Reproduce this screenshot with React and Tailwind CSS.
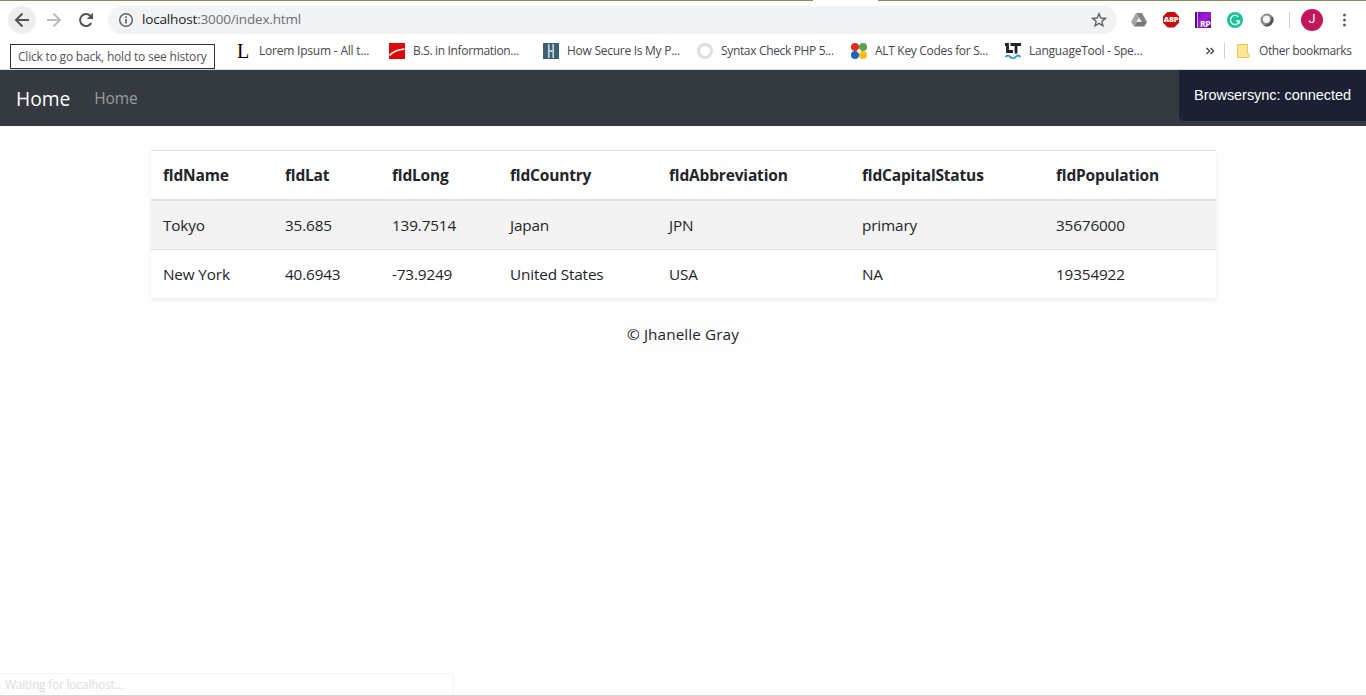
import React from "react";

const columns = [
  ["fldName", "Tokyo", "New York", "w-[122px]"],
  ["fldLat", "35.685", "40.6943", "w-[107px]"],
  ["fldLong", "139.7514", "-73.9249", "w-[118px]"],
  ["fldCountry", "Japan", "United States", "w-[159px]"],
  ["fldAbbreviation", "JPN", "USA", "w-[193px]"],
  ["fldCapitalStatus", "primary", "NA", "w-[194px]"],
  ["fldPopulation", "35676000", "19354922", "w-[172px]"],
];

function Toolbar() {
  return (
    <div className="flex h-[37px] shrink-0 items-center bg-white">
      <div className="ml-2 flex size-7 items-center justify-center rounded-full bg-[#eeeeee]">
        <svg width="16" height="16" viewBox="0 0 16 16" fill="none" stroke="#505357" strokeWidth="2">
          <path d="M15 8H2.500M8.500 1.500L2 8l6.500 6.500" />
        </svg>
      </div>
      <svg className="ml-[10px]" width="16" height="16" viewBox="0 0 16 16" fill="none" stroke="#babcbe" strokeWidth="2">
        <path d="M1 8h12.500M7.500 1.500L14 8l-6.500 6.500" />
      </svg>
      <svg className="ml-4" width="16" height="16" viewBox="0 0 16 16" fill="none">
        <path d="M13.300 11A6 6 0 1 1 12.500 4" stroke="#505357" strokeWidth="2" />
        <path d="M15 0.800V7H8.800z" fill="#505357" />
      </svg>
      <div className="ml-[14px] flex h-7 w-[1009px] items-center rounded-full bg-[#f1f3f4]">
        <svg className="ml-[10px]" width="16" height="16" viewBox="0 0 16 16" fill="none">
          <circle cx="8" cy="8" r="6.300" stroke="#5f6368" strokeWidth="1.500" />
          <path d="M8 7v4.600M8 4.200v1.700" stroke="#5f6368" strokeWidth="1.700" />
        </svg>
        <span className="ml-2 text-[13.500px] tracking-[-0.160px] text-[#6b6f73]">
          <span className="text-[#202124]">localhost</span>:3000/index.html
        </span>
        <svg className="mr-[10px] ml-auto" width="16" height="16" viewBox="0 0 16 16" fill="none" stroke="#5f6368" strokeWidth="1.400">
          <path d="M8 1.700l1.750 4.300 4.650.350-3.570 3 1.120 4.500L8 11.400l-3.950 2.450 1.120-4.500-3.570-3 4.650-.350z" />
        </svg>
      </div>
      <svg className="ml-[14px]" width="16" height="16" viewBox="0 0 16 16">
        <path d="M5 1h6l5 9H10.700z" fill="#858585" />
        <path d="M5 1l3 5-5 8.500L0 10z" fill="#a5a5a5" />
        <path d="M5.700 10H16l-2.700 4.500H3z" fill="#777777" />
        <path d="M8 6l2.500 4h-5z" fill="#ececec" />
      </svg>
      <div className="ml-4 flex size-4 items-center justify-center bg-[#c70d0d] [clip-path:polygon(30%_0,70%_0,100%_30%,100%_70%,70%_100%,30%_100%,0_70%,0_30%)]">
        <span className="text-[7.500px] leading-none font-extrabold tracking-[-0.300px] text-white">ABP</span>
      </div>
      <div className="ml-4 flex size-4 bg-linear-to-br from-[#6a0dad] via-[#a51bd4] to-[#61109a]">
        <span className="h-4 w-[3px] shrink-0 border-r border-[#e5a2f3] bg-[#4b167c]" />
        <span className="mt-auto ml-[2px] text-[8.500px] leading-[9px] font-bold tracking-[-0.400px] text-white">RP</span>
      </div>
      <svg className="ml-4" width="16" height="16" viewBox="0 0 16 16" fill="none">
        <circle cx="8" cy="8" r="8" fill="#15c39a" />
        <path d="M11.300 4.700A4.600 4.600 0 1 0 12.500 9H9.200M12.400 8.600v2.800" stroke="white" strokeWidth="1.400" />
      </svg>
      <svg className="ml-4" width="16" height="16" viewBox="0 0 16 16">
        <circle cx="8" cy="8" r="6.500" fill="#8a8a8a" />
        <path d="M13 4a6.500 6.500 0 0 1-8.500 9.500c4.500 0 7.500-3.500 8.500-9.500z" fill="#555555" />
        <circle cx="7.500" cy="7.200" r="3.700" fill="#f4f4f4" />
      </svg>
      <span className="ml-[14px] h-4 w-px bg-[#cfd1d3]" />
      <div className="ml-[11px] flex size-[22px] items-center justify-center rounded-full bg-[#c2185b] font-[Roboto,sans-serif] text-[12.500px] text-white">J</div>
      <svg className="ml-[13px]" width="16" height="16" viewBox="0 0 16 16" fill="#5f6368">
        <circle cx="8.500" cy="3" r="1.500" />
        <circle cx="8.500" cy="8" r="1.500" />
        <circle cx="8.500" cy="13" r="1.500" />
      </svg>
    </div>
  );
}

function Bookmark({ icon, label, spacing }) {
  return (
    <div className="flex w-[154px] shrink-0 items-center gap-2">
      {icon}
      <span className={`whitespace-nowrap ${spacing}`}>{label}</span>
    </div>
  );
}

function BookmarksBar() {
  return (
    <div className="flex h-[31px] shrink-0 items-center bg-white pb-[5px] pl-[235px] text-[12px] text-[#46494d]">
      <Bookmark
        spacing="tracking-[-0.210px]"
        label="Lorem Ipsum - All t..."
        icon={<span className="flex size-4 items-center justify-center font-['Liberation_Serif',serif] text-[20px] leading-none text-black">L</span>}
      />
      <Bookmark
        spacing="tracking-[-0.340px]"
        label="B.S. in Information..."
        icon={
          <svg width="16" height="16" viewBox="0 0 16 16">
            <rect width="16" height="16" fill="#dd0909" />
            <path d="M0.500 12.500C4 8.500 9 6.500 15.500 6" fill="none" stroke="white" strokeWidth="1.600" />
          </svg>
        }
      />
      <Bookmark
        spacing="tracking-[-0.270px]"
        label="How Secure Is My P..."
        icon={
          <svg width="16" height="16" viewBox="0 0 16 16">
            <rect width="16" height="16" fill="#3b6074" />
            <path d="M5.800 1v14M10.200 1v14M6 8h4" fill="none" stroke="#b9ccd3" strokeWidth="1.800" />
          </svg>
        }
      />
      <Bookmark
        spacing="tracking-[-0.340px]"
        label="Syntax Check PHP 5..."
        icon={<span className="size-4 rounded-full border-3 border-[#dfdfdf] bg-white" />}
      />
      <Bookmark
        spacing="tracking-[-0.310px]"
        label="ALT Key Codes for S..."
        icon={
          <svg width="16" height="16" viewBox="0 0 16 16">
            <circle cx="4" cy="4" r="4" fill="#df2d20" />
            <circle cx="12" cy="4" r="4" fill="#58a447" />
            <circle cx="4" cy="12" r="4" fill="#1d65b8" />
            <circle cx="12" cy="12" r="4" fill="#f6bd17" />
            <circle cx="8" cy="8" r="2" fill="#f5eee0" />
          </svg>
        }
      />
      <Bookmark
        spacing="tracking-[-0.240px]"
        label="LanguageTool - Spe..."
        icon={
          <svg width="16" height="16" viewBox="0 0 16 16" fill="none">
            <path d="M0 1.500h2.500v7H8M5.500 1.500H16M11 1v9.500" stroke="#222222" strokeWidth="2.800" />
            <path d="M0.500 14c2-2 3-2 5 0s3 2 5 0 3-2 5 0" stroke="#2f9fce" strokeWidth="2" />
          </svg>
        }
      />
      <svg className="ml-[46px]" width="10" height="10" viewBox="0 0 10 10" fill="none" stroke="#505357" strokeWidth="1.600">
        <path d="M1.500 2l3 3-3 3M5.500 2l3 3-3 3" />
      </svg>
      <span className="ml-[9px] h-4 w-px bg-[#cfd1d3]" />
      <svg className="ml-3" width="14" height="16" viewBox="0 0 14 16">
        <path d="M.5 1.500h10v9l1.500.500v3.500H.5z" fill="#ffe69a" stroke="#e9c65a" />
      </svg>
      <span className="ml-2 tracking-[-0.400px] whitespace-nowrap">Other bookmarks</span>
    </div>
  );
}

export default function App() {
  return (
    <div className="relative flex h-[696px] w-[1366px] flex-col overflow-hidden bg-[#fefefe] font-['Open_Sans','Noto_Sans',sans-serif]">
      <div className="flex h-px shrink-0 bg-[#8c8662]">
        <span className="ml-[813px] h-px w-[65px] bg-white" />
      </div>
      <Toolbar />
      <BookmarksBar />
      <div className="h-px shrink-0 bg-[#d5d8dc]" />

      <nav className="flex h-14 shrink-0 items-start bg-[#343a40]">
        <a className="ml-4 pt-[14px] text-[19.300px] leading-[30px] tracking-[-0.060px] text-white">Home</a>
        <a className="ml-6 pt-[16px] text-[15.500px] leading-6 tracking-[-0.100px] text-[#999c9f]">Home</a>
        <div className="ml-auto flex h-[51px] w-[187px] items-center rounded-bl-[5px] bg-[#1b2032] pl-[15px] font-['Liberation_Sans',sans-serif] text-[14.500px] tracking-[-0.040px] text-white">
          Browsersync: connected
        </div>
      </nav>

      <main className="flex flex-col items-center pt-6 text-[15.300px] leading-6 text-[#212529]">
        <table className="ml-px w-[1065px] table-fixed border-separate border-spacing-0 bg-white text-left shadow-[0_2px_4px_rgba(0,0,0,0.075)]">
          <thead>
            <tr>
              {columns.map((c) => (
                <th
                  key={c[0]}
                  className={`h-[51px] border-t border-b-2 border-[#dee2e6] px-3 py-0 text-[15.500px] font-bold tracking-[-0.170px] ${c[3]}`}
                >
                  {c[0]}
                </th>
              ))}
            </tr>
          </thead>
          <tbody className="tracking-[-0.150px]">
            <tr>
              {columns.map((c) => (
                <td key={c[0]} className="h-12 bg-[#f3f3f3] px-3 py-0">{c[1]}</td>
              ))}
            </tr>
            <tr>
              {columns.map((c) => (
                <td key={c[0]} className="h-[49px] border-t border-[#dee2e6] px-3 py-0">{c[2]}</td>
              ))}
            </tr>
          </tbody>
        </table>
        <footer className="mt-6 tracking-[0.100px]">© Jhanelle Gray</footer>
      </main>

      <div className="mt-auto flex h-[22px] w-[454px] shrink-0 items-center rounded-tr-[3px] border-t border-r border-[#f4f4f4] pl-[5px] text-[12px] tracking-[-0.240px] text-[#dddddd]">
        Waiting for localhost...
      </div>
      <div className="h-px shrink-0 bg-[#d6d5d0]" />

      <div className="absolute top-[44px] left-[10px] flex h-[25px] w-[205px] items-center border border-[#303236] bg-white pl-[7px] text-[12px] tracking-[-0.200px] whitespace-nowrap text-[#515357]">
        Click to go back, hold to see history
      </div>
    </div>
  );
}
